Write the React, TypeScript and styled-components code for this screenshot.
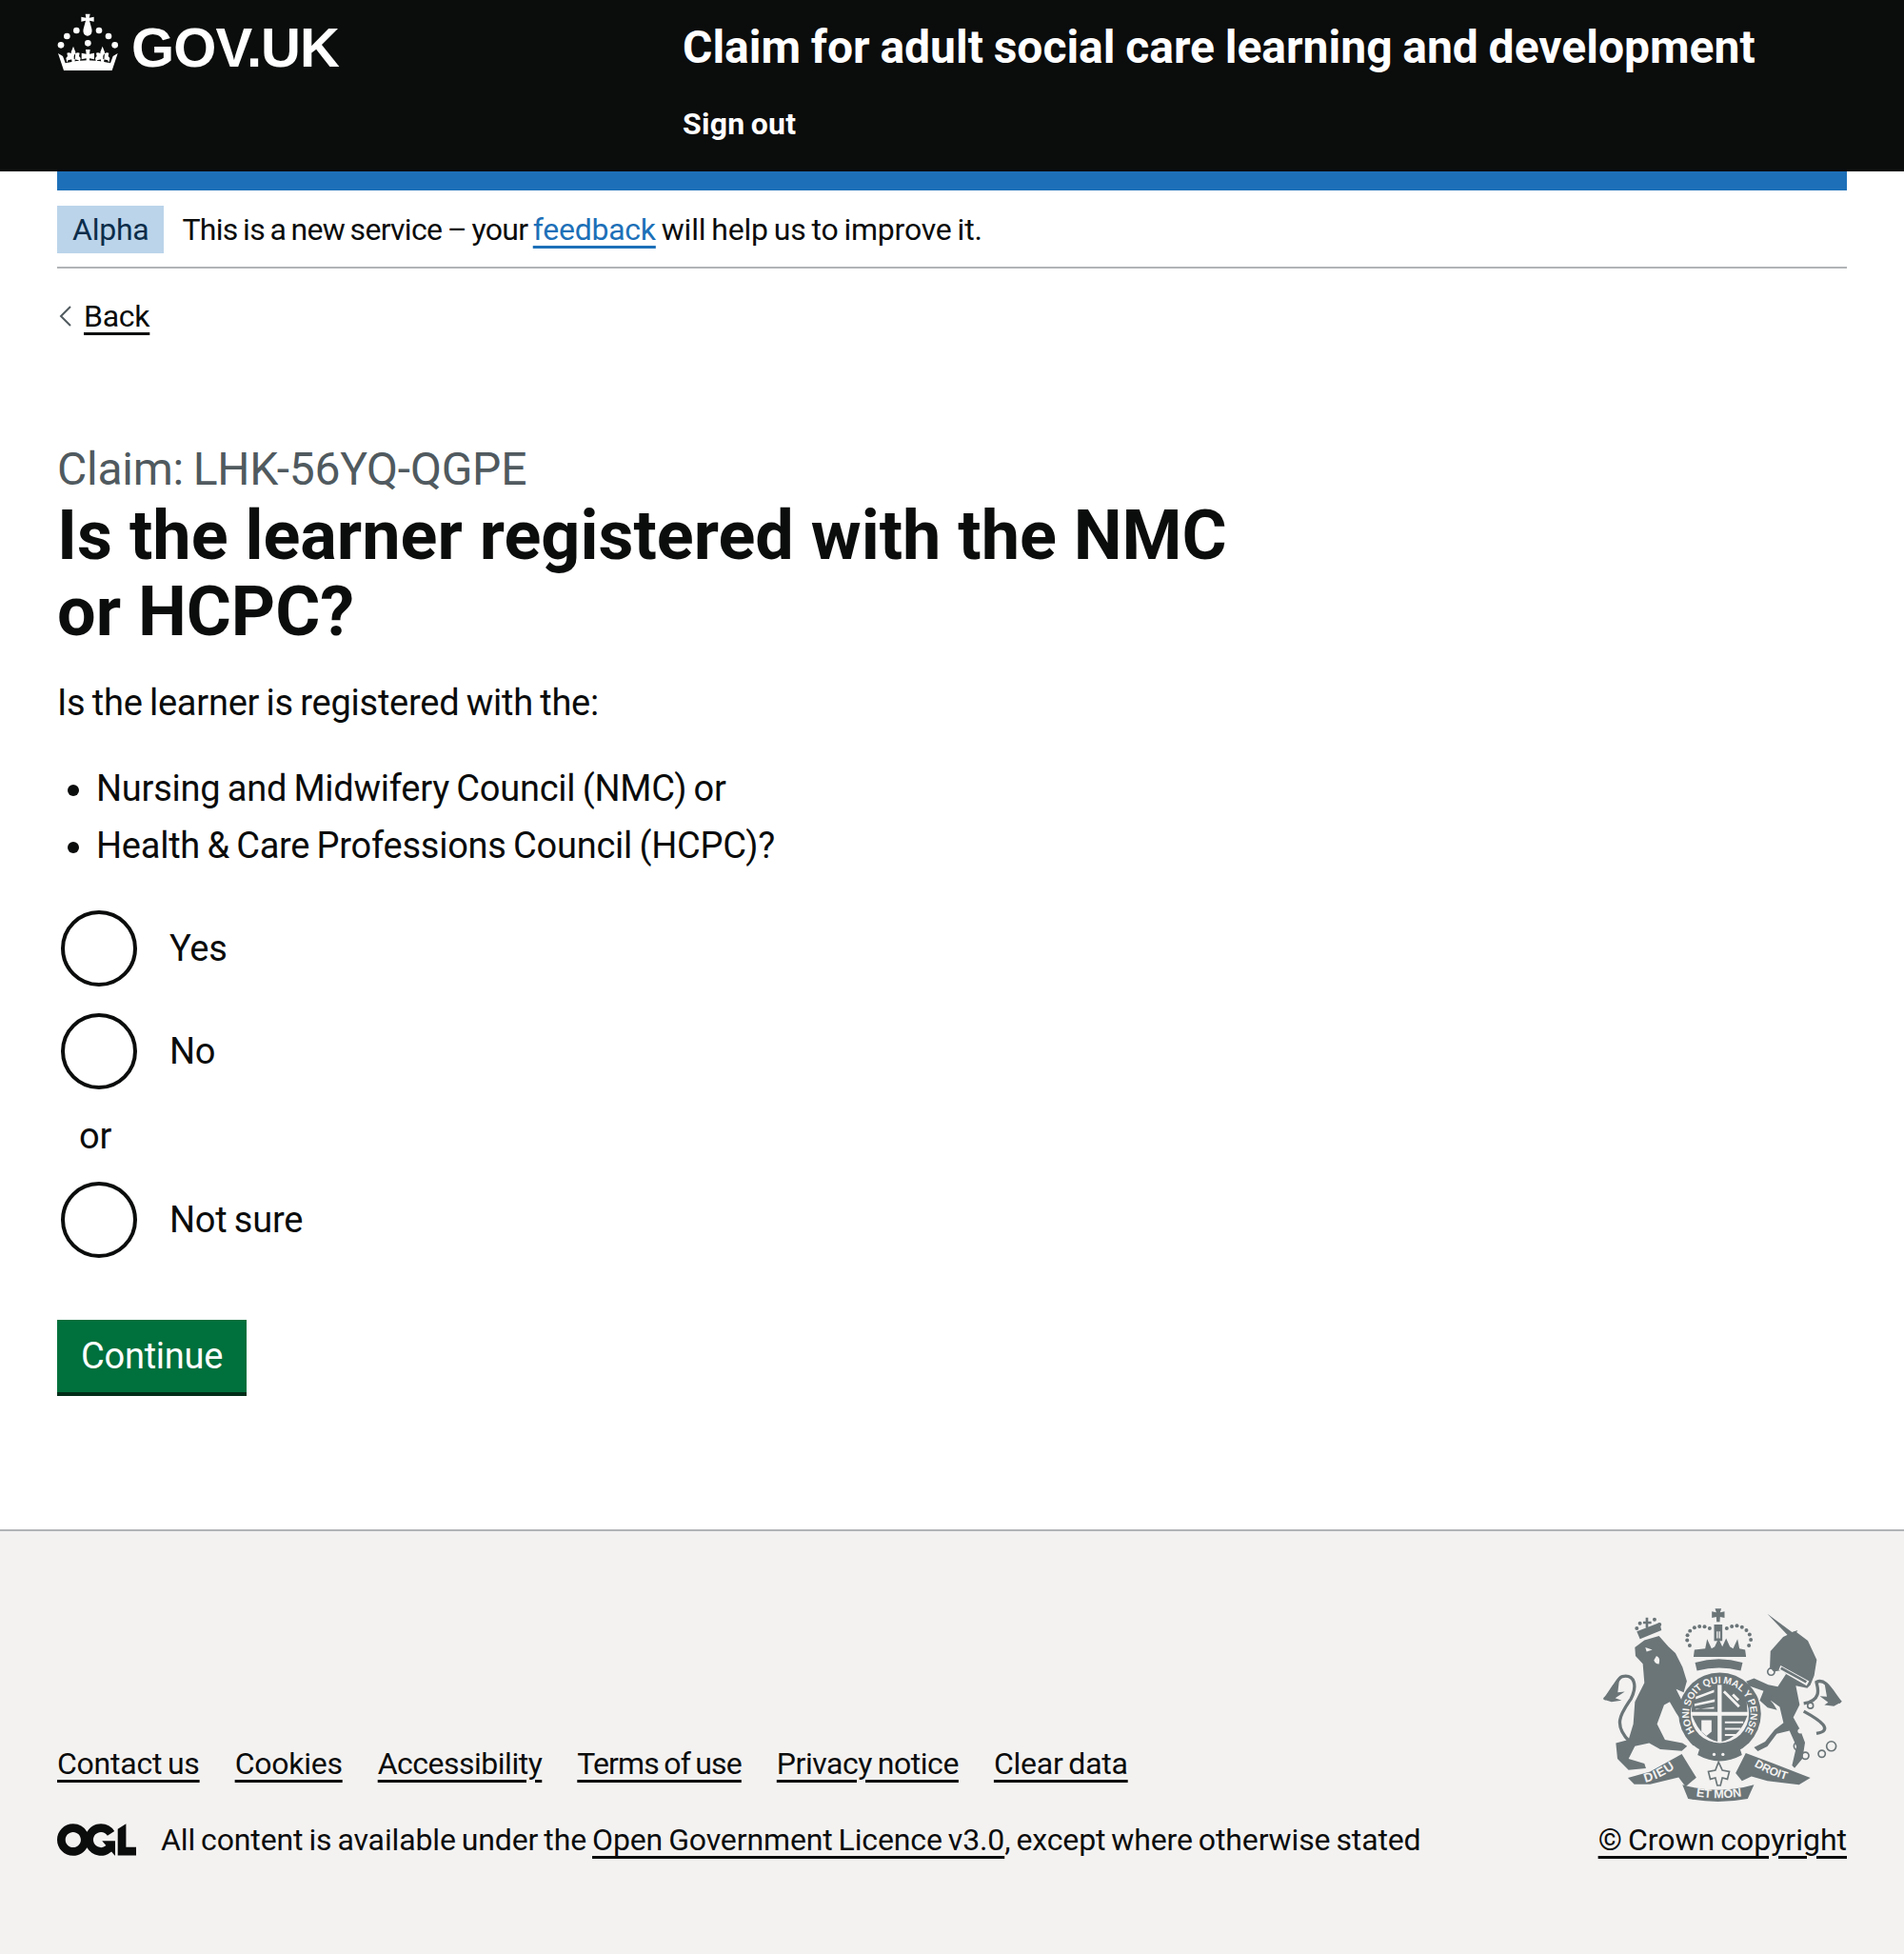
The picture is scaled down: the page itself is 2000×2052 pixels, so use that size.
import React from 'react'
import styled, { createGlobalStyle } from 'styled-components'

const GlobalStyle = createGlobalStyle`
  html, body {
    margin: 0;
    padding: 0;
    background: #fff;
    color: #0b0c0c;
    font-family: Roboto, "Noto Sans", Arial, sans-serif;
    font-size: 38px;
    line-height: 50px;
    letter-spacing: -0.25px;
    word-spacing: -1.8px;
  }
`

const Page = styled.div`
  width: 2000px;
  min-height: 2052px;
  display: flex;
  flex-direction: column;
`

const Masthead = styled.header`
  background: #0b0c0c;
  color: #fff;
  height: 180px;
  padding: 0 60px;
  box-sizing: border-box;
  display: flex;
`

const LogoLink = styled.a`
  width: 657px;
  height: 100px;
  display: flex;
  align-items: flex-start;
  color: #fff;
`

const Crown = styled.svg`
  width: 64px;
  height: 60px;
  margin-top: 14px;
  margin-right: 14px;
  flex: none;
`

const Logotype = styled.span`
  font-family: "Liberation Sans", Arial, sans-serif;
  font-weight: 700;
  font-size: 58px;
  line-height: 100px;
  letter-spacing: -0.9px;
`

const ServiceColumn = styled.div`
  display: flex;
  flex-direction: column;
`

const ServiceName = styled.div`
  font-weight: 700;
  font-size: 48px;
  line-height: 50px;
  margin-top: 25px;
  white-space: nowrap;
  letter-spacing: 0;
  word-spacing: -1.2px;
`

const SignOut = styled.a`
  font-weight: 700;
  font-size: 32px;
  line-height: 40px;
  margin-top: 35px;
  letter-spacing: 0.25px;
`

const Container = styled.div`
  padding: 0 60px;
`

const PhaseBanner = styled.div`
  border-top: 20px solid #1d70b8;
  border-bottom: 2px solid #b1b4b6;
  padding: 16px 0 14px;
  display: flex;
  align-items: center;
`

const Tag = styled.strong`
  font-weight: 400;
  background: #bbd4ea;
  color: #0c2d4a;
  font-size: 32px;
  line-height: 50px;
  height: 50px;
  padding: 0 16px;
  margin-right: 19px;
`

const BannerText = styled.span`
  font-size: 32px;
  line-height: 50px;
  letter-spacing: -0.2px;
`

const BannerLead = styled.span`
  letter-spacing: -0.7px;
`

const Link = styled.a<{ $blue?: boolean; $track?: number }>`
  color: ${p => (p.$blue ? '#1d70b8' : '#0b0c0c')};
  letter-spacing: ${p => p.$track ?? -0.25}px;
  text-decoration: underline;
  text-decoration-thickness: 3px;
  text-underline-offset: 6px;
`

const BackRow = styled.div`
  margin-top: 30px;
  display: flex;
  align-items: center;
  font-size: 32px;
  line-height: 40px;
`

const Chevron = styled.svg`
  width: 14px;
  height: 24px;
  margin-right: 12px;
  margin-left: 2px;
`

const Caption = styled.div`
  color: #505a5f;
  font-size: 48px;
  line-height: 60px;
  margin-top: 111px;
`

const Heading = styled.h1`
  margin: 0;
  font-size: 72px;
  line-height: 80px;
  font-weight: 700;
  width: 1300px;
  margin-top: 0;
  letter-spacing: 0;
  word-spacing: 0;
`

const Para = styled.p`
  margin: 30px 0 0;
`

const Bullets = styled.ul`
  margin: 40px 0 0;
  padding: 0 0 0 41px;
  li {
    margin-bottom: 10px;
  }
`

const Radios = styled.div`
  margin-top: 43px;
`

const RadioRow = styled.label`
  display: flex;
  align-items: center;
  height: 80px;
  margin-bottom: 28px;
`

const RadioCircle = styled.span`
  width: 80px;
  height: 80px;
  box-sizing: border-box;
  border: 4px solid #0b0c0c;
  border-radius: 50%;
  margin: 0 34px 0 4px;
  flex: none;
`

const RadioDivider = styled.div`
  margin: -4px 0 23px 23px;
  height: 50px;
`

const Button = styled.button`
  display: block;
  border: 0;
  margin-top: 65px;
  background: #00703c;
  color: #fff;
  box-shadow: 0 4px 0 #002d18;
  font: inherit;
  letter-spacing: inherit;
  word-spacing: inherit;
  padding: 15px 25px;
  height: 76px;
  box-sizing: border-box;
  line-height: 46px;
`

const Footer = styled.footer`
  margin-top: 144px;
  flex: 1;
  background: #f3f2f1;
  border-top: 2px solid #b1b4b6;
  padding: 81px 60px 0;
  display: flex;
  justify-content: space-between;
  align-items: flex-start;
  font-size: 32px;
  line-height: 40px;
`

const FooterLeft = styled.div`
  padding-top: 143px;
`

const FooterLinks = styled.div`
  display: flex;
  gap: 37px;
`

const Licence = styled.div`
  display: flex;
  align-items: center;
  margin-top: 40px;
  letter-spacing: -0.13px;
`

const OglMark = styled.svg`
  width: 83px;
  height: 34px;
  margin-right: 26px;
  color: #0b0c0c;
`

const FooterRight = styled.div`
  display: flex;
  flex-direction: column;
  align-items: flex-end;
`

const Arms = styled.svg`
  width: 252px;
  height: 203px;
  margin-right: 5px;
  margin-bottom: 20px;
  display: block;
`

const Fleur = ({ x, y }: { x: number; y: number }) => (
  <path
    d={`M${x} ${y - 28}l7 18-3 38h-8l-3-38zM${x - 20} ${y - 7}q12-4 18 9v10q-12 4-14 3l-4 8-3-14 5-6zM${x + 20} ${y - 7}q-12-4-18 9v10q12 4 14 3l4 8 3-14-5-6z`}
  />
)

const CrownIcon = () => (
  <Crown viewBox="15 10 190 180" fill="#fff">
    <path d="M103 12h15l-3 12 15-3v15l-14-3 7 26c3 14-4 22-13 22s-16-8-13-22l7-26-14 3V21l15 3z" />
    <circle cx="45" cy="82" r="10" />
    <circle cx="75" cy="64" r="10" />
    <circle cx="146" cy="64" r="10" />
    <circle cx="176" cy="82" r="10" />
    <circle cx="26" cy="110" r="10" />
    <circle cx="196" cy="110" r="10" />
    <circle cx="111" cy="104" r="10" />
    <Fleur x={65} y={142} />
    <Fleur x={157} y={142} />
    <path d="M104 124h14l-2 14 15-3v20l-15-3v16h-10v-16l-15 3v-20l15 3z" />
    <path d="M17 136l15 9 8 22q70-18 142 0l8-22 15-9-18 54H35z" />
  </Crown>
)

const ArmsDrawing = () => {
  const ink = '#6b7578'
  const bg = '#f3f2f1'
  return (
    <Arms viewBox="70 55 755 610">
      <defs>
        <path id="garter-ring" d="M391 472A97 97 0 1 1 489 472" />
        <path id="ribbon-left" d="M205 604Q265 590 322 540" />
        <path id="ribbon-mid" d="M348 645Q435 662 526 645" />
        <path id="ribbon-right" d="M548 552Q600 585 672 602" />
      </defs>
      {/* lion */}
      <path
        fill={ink}
        d="M172 178l30-22 46-14 30 34 22 20 22 44 14 45-10 35-24-10 30 60 10 30-20 15-20-30-20-35-18 10-22 60 25 50 55 10 15 10-17 15-68-5-35-20-45 10-20 40 50 15 5 15-55 5-35-35-5-50 40-10 15-50 5-70 30-60-5-60-23-25z"
      />
      <path fill={bg} d="M205 178l22 8-18 6zM240 205q14 5 8 26-12 0-16-12z" />
      <path
        fill="none"
        stroke={ink}
        strokeWidth="10"
        d="M155 475C100 420 130 385 160 340C180 300 172 262 132 270C112 276 105 320 75 342"
      />
      <path fill={ink} d="M72 342l28-42 24-30-6 50 22-2-30 20 20 8-32 4z" />
      {/* lion crown */}
      <path fill={ink} d="M188 152l-10-24 72-28 6 24zM198 96h8V84h8v12h10v8h-10v12h-8v-12h-8z" />
      <g fill={ink}>
        <circle cx="178" cy="118" r="6" />
        <circle cx="188" cy="102" r="6" />
        <circle cx="234" cy="90" r="6" />
        <circle cx="250" cy="106" r="6" />
      </g>
      {/* unicorn */}
      <path fill={ink} d="M590 72l78 58 18-6-18 30z" />
      <path
        fill={ink}
        d="M600 190l40-45 38-18 40 30 28 60-8 50-12 30-10 10-36-8 12 60-20 40 22 40 15 40-8 50-25 30-8-8 14-60-22-50-40 10-30 40-30 15-12-12 35-18 30-38 28-22-12-50-30-22 10 12 12 20-30-8-25-22 12-30-45-16-10-14 25-10 45 20 30 6 26-40-14-12-25 5-12-14z"
      />
      <path
        fill="none"
        stroke={ink}
        strokeWidth="10"
        d="M705 355C770 345 745 295 745 288C775 270 800 330 822 352"
      />
      <path fill="none" stroke={ink} strokeWidth="10" d="M705 380C760 410 800 440 745 450" />
      <path fill={ink} d="M822 352l-28-36-24-28 8 46-22-2 26 20-12 8 30 4z" />
      <g fill="none" stroke={ink} strokeWidth="5">
        <circle cx="602" cy="255" r="11" />
        <circle cx="590" cy="338" r="11" />
        <circle cx="686" cy="490" r="12" />
        <circle cx="710" cy="520" r="11" />
        <circle cx="762" cy="514" r="11" />
        <circle cx="792" cy="490" r="15" />
        <circle cx="726" cy="362" r="9" />
      </g>
      <g fill={bg}>
        <circle cx="718" cy="405" r="7" />
        <circle cx="694" cy="442" r="8" />
        <path d="M632 235l90 50-8 14-88-50z" />
      </g>
      <path fill={ink} d="M635 240l80 44-4 7-80-44z" />
      {/* main crown */}
      <g fill={ink}>
        <path d="M425 56h20l-4 12 14-3v20l-14-3-1 16h-10l-1-16-14 3V65l14 3z" />
        <path d="M422 106h26v52h-26z" />
        <path d="M360 186l-3 22h166l-3-22-18-4-6-30-14 30-10-6-12-26-12 26-12-26-12 26-10 6-14-30-6 30z" />
        <path d="M362 226q75-22 150 0l-6 26q-68-18-138 0z" />
        {[
          [345, 172],
          [337, 156],
          [338, 140],
          [346, 126],
          [360, 116],
          [376, 112],
          [392, 113],
          [408, 118],
          [462, 118],
          [478, 112],
          [494, 110],
          [510, 114],
          [524, 124],
          [534, 138],
          [538, 154],
          [532, 172]
        ].map(([x, y]) => (
          <circle key={`${x}-${y}`} cx={x} cy={y} r="6" />
        ))}
      </g>
      <path fill={bg} d="M430 128h4v22h-4zM437 128h4v22h-4z" />
      {/* shield with garter */}
      <circle cx="440" cy="388" r="130" fill={ink} />
      <circle cx="440" cy="388" r="92" fill={bg} />
      <g fill={ink}>
        <path d="M358 326q38-30 75-34v90h-82q0-30 7-56z" />
        <path d="M446 292q36 4 74 34 7 26 7 56h-81z" />
        <path d="M353 394h80v82q-54-14-80-82z" />
        <path d="M446 394h81q-25 68-81 82z" />
      </g>
      <g fill={bg}>
        <path d="M364 334l58-22v8l-58 22zM360 356l64-14v8l-64 14zM364 374l58-8v6h-58z" />
        <path d="M456 314l48 48-6 6-48-48zM484 324l18 18-6 6-18-18z" />
        <path d="M382 408h32v36l-16 14-16-14z" />
        <path d="M456 412h58v6h-58zM456 432h50v6h-50zM456 452h34v6h-34z" />
      </g>
      <text fill={bg} fontFamily="Liberation Sans, sans-serif" fontSize="31" fontWeight="700">
        <textPath href="#garter-ring" startOffset="50%" textAnchor="middle">
          HONI SOIT QUI MAL Y PENSE
        </textPath>
      </text>
      <path fill={ink} d="M376 498q64 32 128 0l6 20q-70 38-140 0z" />
      <circle cx="422" cy="516" r="5" fill={bg} />
      <circle cx="450" cy="516" r="5" fill={bg} />
      {/* motto */}
      <path fill={ink} d="M150 590l70-20 100-55 46 74-34 29-22-30-90 22-50 0z" />
      <path fill={ink} d="M322 612q113 32 226 0l-20 44q-94 18-188 0z" />
      <path fill={ink} d="M522 512l88 33 116 45-36 22-100-12-50-15-30 15-20-25z" />
      <path
        fill={bg}
        stroke={ink}
        strokeWidth="5"
        d="M436 540l12 26 22 4-6 24-16-4-6 24h-10l-6-24-16 4-6-24 22-4z"
      />
      <text fill={bg} fontFamily="Liberation Sans, sans-serif" fontSize="40" fontWeight="700" letterSpacing="3">
        <textPath href="#ribbon-left">DIEU</textPath>
      </text>
      <text fill={bg} fontFamily="Liberation Sans, sans-serif" fontSize="38" fontWeight="700">
        <textPath href="#ribbon-mid" startOffset="50%" textAnchor="middle">
          ET MON
        </textPath>
      </text>
      <text fill={bg} fontFamily="Liberation Sans, sans-serif" fontSize="36" fontWeight="700">
        <textPath href="#ribbon-right">DROIT</textPath>
      </text>
    </Arms>
  )
}

const App = () => {
  return (
    <Page>
      <GlobalStyle />
      <Masthead>
        <LogoLink>
          <CrownIcon />
          <Logotype>GOV.UK</Logotype>
        </LogoLink>
        <ServiceColumn>
          <ServiceName>Claim for adult social care learning and development</ServiceName>
          <SignOut>Sign out</SignOut>
        </ServiceColumn>
      </Masthead>
      <Container>
        <PhaseBanner>
          <Tag>Alpha</Tag>
          <BannerText>
            <BannerLead>This is a new service – your </BannerLead>
            <Link $blue>feedback</Link> will help us to improve it.
          </BannerText>
        </PhaseBanner>
        <BackRow>
          <Chevron viewBox="0 0 14 24">
            <path d="M12 2L2 12l10 10" fill="none" stroke="#505a5f" strokeWidth="2" />
          </Chevron>
          <Link>Back</Link>
        </BackRow>
        <Caption>Claim: LHK-56YQ-QGPE</Caption>
        <Heading>Is the learner registered with the NMC or HCPC?</Heading>
        <Para>Is the learner is registered with the:</Para>
        <Bullets>
          <li>Nursing and Midwifery Council (NMC) or</li>
          <li>Health &amp; Care Professions Council (HCPC)?</li>
        </Bullets>
        <Radios>
          <RadioRow>
            <RadioCircle />
            Yes
          </RadioRow>
          <RadioRow>
            <RadioCircle />
            No
          </RadioRow>
          <RadioDivider>or</RadioDivider>
          <RadioRow>
            <RadioCircle />
            Not sure
          </RadioRow>
        </Radios>
        <Button>Continue</Button>
      </Container>
      <Footer>
        <FooterLeft>
          <FooterLinks>
            <Link>Contact us</Link>
            <Link>Cookies</Link>
            <Link $track={-0.5}>Accessibility</Link>
            <Link $track={-0.85}>Terms of use</Link>
            <Link $track={-0.45}>Privacy notice</Link>
            <Link>Clear data</Link>
          </FooterLinks>
          <Licence>
            <OglMark viewBox="0 0 483.2 195.7">
              <path
                fill="currentColor"
                d="M421.5 142.8V.1l-50.7 32.3v161.1h112.4v-50.7zm-122.3-9.6A47.12 47.12 0 0 1 221 97.8c0-26 21.1-47.1 47.1-47.1 16.7 0 31.4 8.7 39.7 21.8l42.7-27.2A97.63 97.63 0 0 0 268.1 0c-36.5 0-68.3 20.1-85.1 49.7A98 98 0 0 0 97.8 0C43.9 0 0 43.9 0 97.8s43.9 97.8 97.8 97.8c36.5 0 68.3-20.1 85.1-49.7a97.76 97.76 0 0 0 149.6 25.4l19.4 22.2h3v-87.8h-80l24.3 27.5zM97.8 145c-26 0-47.1-21.1-47.1-47.1s21.1-47.1 47.1-47.1 47.2 21 47.2 47S123.8 145 97.8 145"
              />
            </OglMark>
            <span>
              All content is available under the <Link $track={-0.13}>Open Government Licence v3.0</Link>, except
              where otherwise stated
            </span>
          </Licence>
        </FooterLeft>
        <FooterRight>
          <ArmsDrawing />
          <Link $track={0}>© Crown copyright</Link>
        </FooterRight>
      </Footer>
    </Page>
  )
}

export default App
